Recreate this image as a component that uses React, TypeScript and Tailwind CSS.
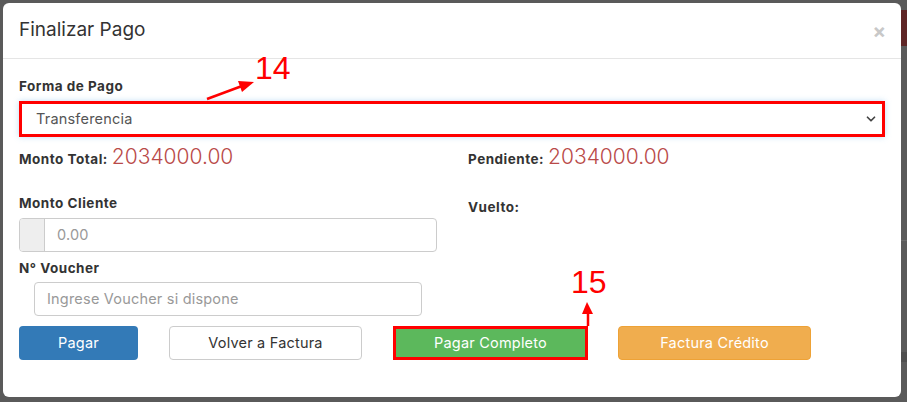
import { ChevronDown } from "lucide-react";

const font = { fontFamily: "Inter, 'Noto Sans', sans-serif" };

function Label({ children }: { children: React.ReactNode }) {
  return <label className="block text-[13.5px] font-bold tracking-[0.5px] text-[#333]">{children}</label>;
}

export default function App() {
  return (
    <div className="relative h-[402px] w-[907px] overflow-hidden bg-[#5a5a5a] pl-[3px] pt-[3px]" style={font}>
      {/* page behind the overlay */}
      <div className="absolute right-0 top-[10px] h-[36px] w-[6px] bg-[#5e2626]" />
      <div className="absolute right-0 top-[240px] h-px w-[6px] bg-[#6a6a6a]" />
      <div className="absolute right-0 top-[352px] h-[10px] w-[6px] bg-[#4e4e4e]" />

      <div className="relative h-[394px] w-[898px] rounded-md bg-white">
        {/* header */}
        <div className="flex h-[56px] items-center justify-between border-b border-[#e5e5e5] pl-[16px] pr-[15px]">
          <h4 className="text-[19px] font-normal text-[#333]">Finalizar Pago</h4>
          <span className="text-[20px] font-bold leading-none text-[#c8c8c8]">×</span>
        </div>

        {/* body */}
        <div className="px-[16px] pt-[17px] text-[14.5px] tracking-[0.2px]">
          <Label>Forma de Pago</Label>
          <div className="mt-[5px] flex h-[36px] items-center justify-between border-[3px] border-[#ff0000] pl-[14px] pr-[4px] text-[#555] shadow-[0_0_6px_rgba(102,175,233,0.4)]">
            <span>Transferencia</span>
            <ChevronDown className="h-[14px] w-[14px] text-[#444]" strokeWidth={3} />
          </div>

          <div className="mt-[4px] grid grid-cols-[449px_1fr]">
            <div>
              <div className="flex items-baseline">
                <span className="text-[13.5px] font-bold tracking-[0.5px] text-[#333]">Monto Total:</span>
                <span className="ml-[4px] text-[21px] font-light tracking-normal text-[#b94a48]">2034000.00</span>
              </div>
              <div className="mt-[20px]">
                <Label>Monto Cliente</Label>
              </div>
              <div className="mt-[5px] flex h-[34px] w-[418px] overflow-hidden rounded border border-[#ccc]">
                <div className="w-[25px] border-r border-[#ccc] bg-[#eee]" />
                <div className="flex items-center pl-[12px] text-[#999]">0.00</div>
              </div>
              <div className="mt-[6px]">
                <Label>N° Voucher</Label>
              </div>
              <div className="ml-[15px] mt-[4px] flex h-[34px] w-[388px] items-center rounded border border-[#ccc] pl-[12px] text-[#999]">
                Ingrese Voucher si dispone
              </div>
            </div>
            <div>
              <div className="flex items-baseline">
                <span className="text-[13.5px] font-bold tracking-[0.5px] text-[#333]">Pendiente:</span>
                <span className="ml-[4px] text-[21px] font-light tracking-normal text-[#b94a48]">2034000.00</span>
              </div>
              <div className="mt-[24px]">
                <Label>Vuelto:</Label>
              </div>
            </div>
          </div>

          <div className="mt-[10px] flex h-[34px]">
            <button className="w-[119px] rounded bg-[#337ab7] text-white">Pagar</button>
            <button className="ml-[31px] w-[193px] rounded border border-[#ccc] bg-white text-[#333]">Volver a Factura</button>
            <button className="ml-[31px] w-[195px] border-[3px] border-[#ff0000] bg-[#5cb85c] text-white">Pagar Completo</button>
            <button className="ml-[30px] w-[193px] rounded border border-[#eea236] bg-[#f0ad4e] text-white">Factura Crédito</button>
          </div>
        </div>
      </div>

      {/* annotations */}
      <span className="absolute left-[255px] top-[52px] text-[32px] leading-none text-[#ff0000]" style={{ fontFamily: "'Liberation Sans', sans-serif" }}>14</span>
      <span className="absolute left-[571px] top-[266px] text-[32px] leading-none text-[#ff0000]" style={{ fontFamily: "'Liberation Sans', sans-serif" }}>15</span>
      <svg className="absolute left-0 top-0" width="907" height="402" viewBox="0 0 907 402">
        <line x1="207" y1="99" x2="242" y2="86" stroke="#ff0000" strokeWidth="2.5" />
        <polygon points="254,82 238,81 242,92" fill="#ff0000" />
        <line x1="588" y1="326" x2="588" y2="312" stroke="#ff0000" strokeWidth="2.5" />
        <polygon points="587,302 582,314 593,314" fill="#ff0000" />
      </svg>
    </div>
  );
}
